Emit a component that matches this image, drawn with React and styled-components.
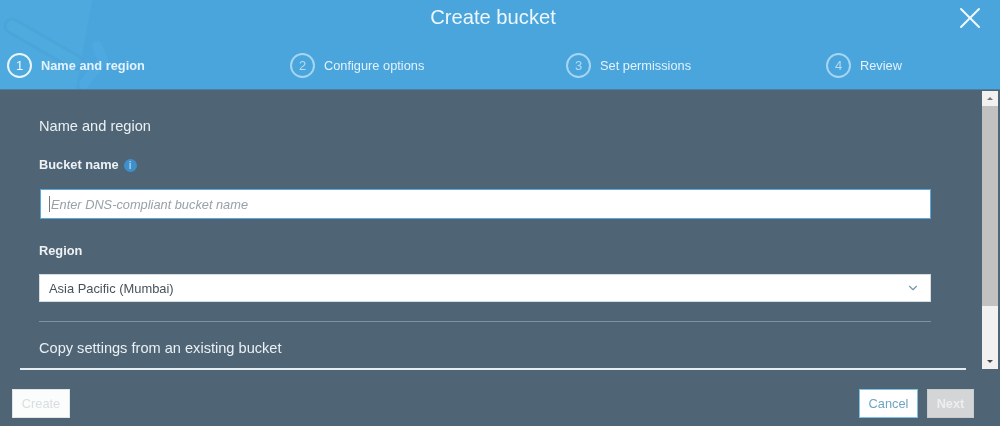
import React from "react";
import styled, { createGlobalStyle } from "styled-components";
import { X, ChevronDown } from "lucide-react";

const GlobalStyle = createGlobalStyle`
    html, body {
        margin: 0;
        padding: 0;
        background: #4f6575;
    }
    body {
        font-family: "Liberation Sans", Arial, sans-serif;
    }
`;

const Modal = styled.div`
    position: relative;
    width: 1000px;
    height: 426px;
    overflow: hidden;
    display: flex;
    flex-direction: column;
    background: #4f6575;
    filter: blur(0.6px);
`;

const Header = styled.header`
    position: relative;
    height: 90px;
    box-sizing: border-box;
    flex-shrink: 0;
    background: #4aa5dc;
    border-bottom: 1px solid #4a7f9f;
    overflow: hidden;
`;

const Watermark = styled.svg`
    position: absolute;
    left: 0;
    top: 0;
`;

const TitleRow = styled.div`
    position: relative;
    height: 53px;
    display: flex;
    align-items: center;
    justify-content: center;
    padding-bottom: 18px;
    box-sizing: border-box;
`;

const Title = styled.h1`
    margin: 0;
    padding-right: 14px;
    color: #eef7fc;
    font-size: 20.2px;
    font-weight: 400;
`;

const CloseButton = styled.div`
    position: absolute;
    right: 12px;
    top: 0;
    color: #f2f9fd;
    display: flex;
`;

const Steps = styled.ol`
    position: relative;
    list-style: none;
    margin: 0;
    padding: 0 0 0 7px;
    display: grid;
    grid-template-columns: 283px 276px 260px auto;
`;

const Step = styled.li`
    display: flex;
    align-items: center;
    gap: 9px;
    color: #e3f2fb;
    font-size: 12.8px;
    font-weight: ${(p) => (p.$active ? 700 : 400)};
`;

const StepNumber = styled.span`
    width: 25px;
    height: 25px;
    box-sizing: border-box;
    border-radius: 50%;
    border: 2px solid ${(p) => (p.$active ? "#e8f5fc" : "#a5d5f1")};
    display: flex;
    align-items: center;
    justify-content: center;
    font-size: 13px;
    font-weight: 400;
    color: ${(p) => (p.$active ? "#f2f9fd" : "#b5dcf3")};
`;

const Main = styled.div`
    display: flex;
    height: 280px;
    flex-shrink: 0;
    padding-left: 20px;
`;

const ScrollPane = styled.div`
    width: 946px;
    box-sizing: border-box;
    height: 280px;
    padding: 28px 35px 0 19px;
    border-bottom: 2px solid #e4edf2;
`;

const SectionTitle = styled.h2`
    margin: 0;
    color: #eaf0f4;
    font-size: 14.6px;
    line-height: 16px;
    font-weight: 400;
`;

const FieldLabel = styled.label`
    display: flex;
    align-items: center;
    gap: 5px;
    color: #eef2f5;
    font-size: 12.8px;
    line-height: 16px;
    font-weight: 700;
    margin: ${(p) => p.$top}px 0 0;
`;

const InfoDot = styled.span`
    width: 13px;
    height: 13px;
    border-radius: 50%;
    background: #3f8fca;
    color: #a9d2ec;
    font-size: 10px;
    line-height: 13px;
    text-align: center;
    font-weight: 700;
`;

const TextInput = styled.div`
    margin: 17px 1px 0 2px;
    height: 28px;
    box-sizing: border-box;
    background: #fff;
    box-shadow: 0 0 0 1px #5aa9dc;
    display: flex;
    align-items: center;
    padding-left: 9px;
    color: #98a1a8;
    font-size: 12.8px;
    font-style: italic;
`;

const Caret = styled.span`
    width: 1px;
    height: 16px;
    margin-right: 1px;
    background: #777;
    margin-left: -1px;
`;

const SelectBox = styled.div`
    margin-top: 15px;
    height: 28px;
    box-sizing: border-box;
    background: #fff;
    border: 1px solid #d5dde2;
    display: flex;
    align-items: center;
    justify-content: space-between;
    padding: 0 10px 0 9px;
    color: #48525a;
    font-size: 12.9px;
`;

const Rule = styled.hr`
    margin: 19px 0 0;
    border: 0;
    height: 1px;
    background: #7f929f;
`;

const CopyLink = styled.div`
    margin-top: 18px;
    color: #eaf0f4;
    font-size: 14.6px;
    line-height: 16px;
`;

const Scrollbar = styled.div`
    width: 16px;
    height: 278px;
    margin: 1px 0 0 16px;
    background: #f1f1f1;
    display: flex;
    flex-direction: column;
    align-items: center;
`;

const ScrollArrow = styled.span`
    height: 15px;
    flex-shrink: 0;
    display: flex;
    align-items: center;
    justify-content: center;
    &::before {
        content: "";
        border-left: 3px solid transparent;
        border-right: 3px solid transparent;
        ${(p) => (p.$down ? "border-top: 3px solid #444;" : "border-bottom: 3px solid #777;")}
    }
`;

const ScrollThumb = styled.div`
    width: 100%;
    height: 200px;
    background: #c1c1c1;
`;

const ScrollTrack = styled.div`
    flex: 1;
`;

const Footer = styled.footer`
    flex: 1;
    display: flex;
    align-items: flex-start;
    justify-content: space-between;
    padding: 19px 26px 0 12px;
`;

const Actions = styled.div`
    display: flex;
    gap: 9px;
`;

const Button = styled.div`
    height: 29px;
    width: ${(p) => p.$width}px;
    box-sizing: border-box;
    display: flex;
    align-items: center;
    justify-content: center;
    font-size: 12.8px;
    font-weight: ${(p) => (p.$strong ? 700 : 400)};
    background: ${(p) => p.$bg};
    color: ${(p) => p.$color};
    border: 1px solid ${(p) => p.$line};
`;

const steps = ["Name and region", "Configure options", "Set permissions", "Review"];

export default function App() {
    return (
        <Modal>
            <GlobalStyle />
            <Header>
                <Watermark width="110" height="89" viewBox="0 0 110 89" fill="none">
                    <path d="M0 0H92L76 89H0Z" fill="#4eaade" />
                    <path d="M12 26L75 62" stroke="#4ba5da" strokeWidth="17" strokeLinecap="round" />
                    <path d="M12 26L75 62" stroke="#4faadd" strokeWidth="11" strokeLinecap="round" />
                    <path d="M97 46L103 60L84 84" stroke="#4da9df" strokeWidth="10" strokeLinecap="round" />
                </Watermark>
                <TitleRow>
                    <Title>Create bucket</Title>
                    <CloseButton>
                        <X size={36} strokeWidth={1.3} />
                    </CloseButton>
                </TitleRow>
                <Steps>
                    {steps.map((label, i) => (
                        <Step key={label} $active={i === 0}>
                            <StepNumber $active={i === 0}>{i + 1}</StepNumber>
                            {label}
                        </Step>
                    ))}
                </Steps>
            </Header>
            <Main>
                <ScrollPane>
                    <SectionTitle>Name and region</SectionTitle>
                    <FieldLabel $top={23}>
                        Bucket name <InfoDot>i</InfoDot>
                    </FieldLabel>
                    <TextInput>
                        <Caret />
                        Enter DNS-compliant bucket name
                    </TextInput>
                    <FieldLabel $top={25}>Region</FieldLabel>
                    <SelectBox>
                        Asia Pacific (Mumbai)
                        <ChevronDown size={14} color="#6f98ad" strokeWidth={2} />
                    </SelectBox>
                    <Rule />
                    <CopyLink>Copy settings from an existing bucket</CopyLink>
                </ScrollPane>
                <Scrollbar>
                    <ScrollArrow />
                    <ScrollThumb />
                    <ScrollTrack />
                    <ScrollArrow $down />
                </Scrollbar>
            </Main>
            <Footer>
                <Button $width={58} $bg="#fbfcfc" $color="#d9dee1" $line="#dfe5e8">Create</Button>
                <Actions>
                    <Button $width={59} $bg="#fff" $color="#6fa5c0" $line="#7fc3e4">Cancel</Button>
                    <Button $width={47} $bg="#d3d5d6" $color="#eeeeee" $line="#c9cccd" $strong>Next</Button>
                </Actions>
            </Footer>
        </Modal>
    );
}
